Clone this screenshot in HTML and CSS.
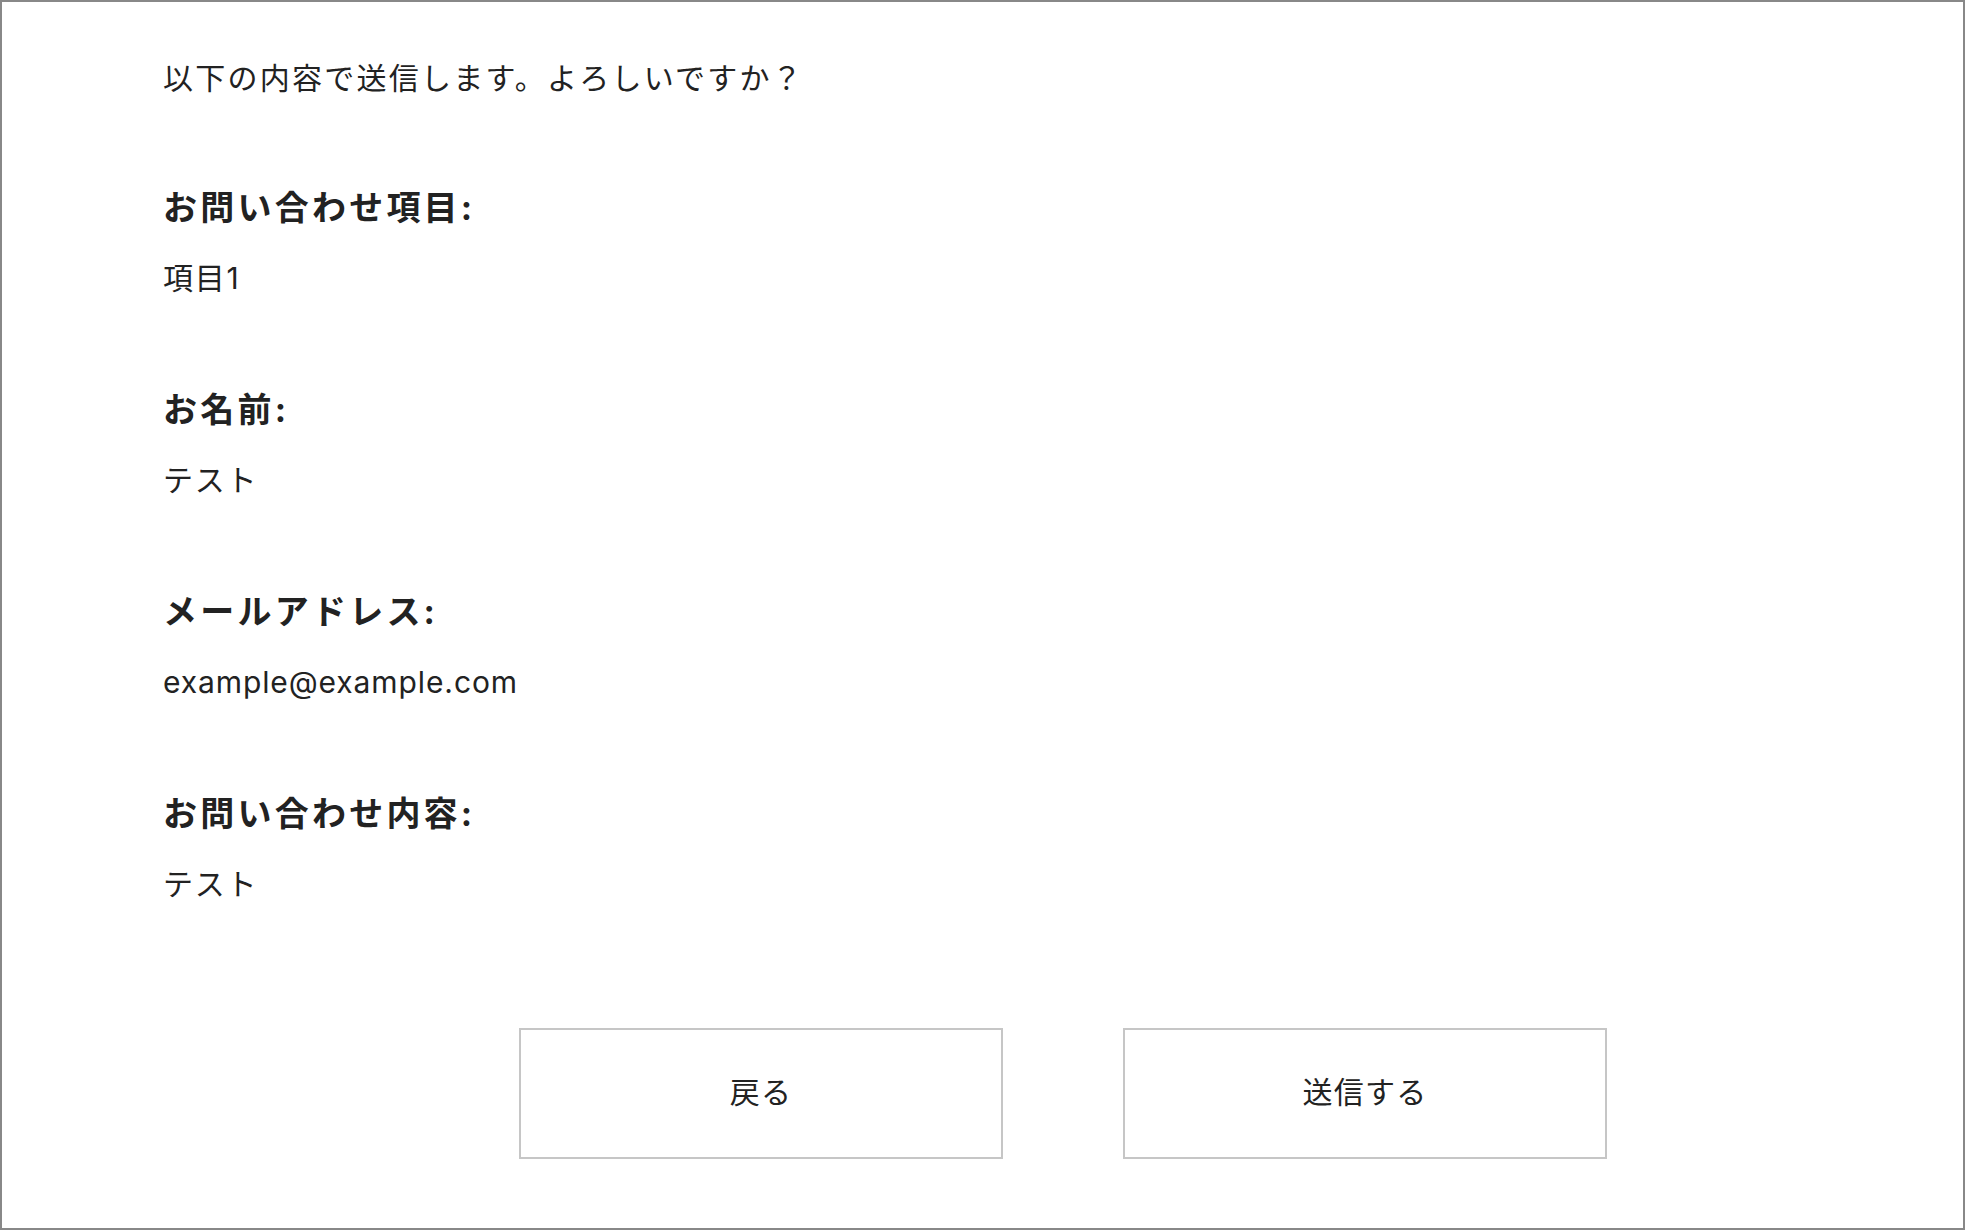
FILE: index.html
```html
<!DOCTYPE html>
<html lang="ja">
<head>
<meta charset="utf-8">
<title>確認</title>
<link rel="stylesheet" href="styles.css">
</head>
<body>
<div class="frame">
  <main class="content">
    <p class="intro">以下の内容で送信します。よろしいですか？</p>
    <dl class="fields">
      <div class="field">
        <dt class="label">お問い合わせ項目:</dt>
        <dd class="value">項目1</dd>
      </div>
      <div class="field">
        <dt class="label">お名前:</dt>
        <dd class="value">テスト</dd>
      </div>
      <div class="field">
        <dt class="label">メールアドレス:</dt>
        <dd class="value value-latin">example@example.com</dd>
      </div>
      <div class="field">
        <dt class="label">お問い合わせ内容:</dt>
        <dd class="value">テスト</dd>
      </div>
    </dl>
    <div class="actions">
      <button class="btn" type="button">戻る</button>
      <button class="btn" type="button">送信する</button>
    </div>
  </main>
</div>
</body>
</html>
```

FILE: styles.css
```css
html, body {
  margin: 0;
  padding: 0;
  background: #fff;
}
body {
  font-family: "Inter", "Noto Sans CJK JP", sans-serif;
  color: #222;
}
.frame {
  box-sizing: border-box;
  width: 1965px;
  height: 1230px;
  border: 2px solid #888;
}
.content {
  padding: 0 0 0 161px;
}
.intro {
  margin: 0;
  padding-top: 56px;
  font-size: 30px;
  line-height: 40px;
  letter-spacing: 0.075em;
}
.fields {
  margin: 90px 0 0;
  display: flex;
  flex-direction: column;
  gap: 92px;
}
.field {
  display: flex;
  flex-direction: column;
  gap: 30px;
}
.label {
  margin: 0;
  font-weight: 700;
  font-size: 34px;
  line-height: 40px;
  letter-spacing: 0.095em;
}
.value {
  margin: 0;
  font-size: 30px;
  line-height: 40px;
  letter-spacing: 0.06em;
}
.value-latin {
  letter-spacing: 0.03em;
}
.actions {
  display: flex;
  justify-content: center;
  gap: 120px;
  margin-top: 124px;
}
.btn {
  box-sizing: border-box;
  width: 484px;
  height: 131px;
  border: 2px solid #c6c6c6;
  background: #fff;
  color: #222;
  font-family: "Inter", "Noto Sans CJK JP", sans-serif;
  font-size: 30px;
  line-height: 40px;
  letter-spacing: 0.04em;
  padding: 0 0 4px;
}
```
